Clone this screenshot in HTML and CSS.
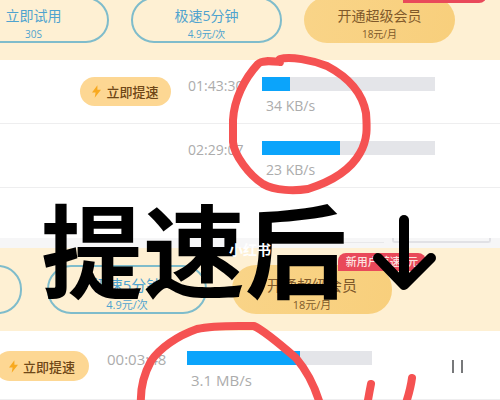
FILE: index.html
```
<!DOCTYPE html>
<html lang="zh-CN">
<head>
  <meta charset="utf-8">
  <title>提速后</title>
  <link rel="stylesheet" href="styles.css">
</head>
<body>
  <main class="page">
    <section class="panel">
      <div class="banner">
        <button class="plan"><span class="plan-name">立即试用</span><span class="plan-price">30S</span></button>
        <button class="plan"><span class="plan-name">极速5分钟</span><span class="plan-price">4.9元/次</span></button>
        <button class="plan plan-vip"><span class="plan-name">开通超级会员</span><span class="plan-price">18元/月</span>
          <span class="badge badge-cut"></span>
        </button>
      </div>
      <div class="task">
        <button class="boost">
          <svg class="bolt" viewBox="0 0 10 14"><path d="M6 0 L0 8 H4 L3 14 L10 5 H6 Z"/></svg>立即提速
        </button>
        <span class="time">01:43:30</span>
        <div class="speed">
          <div class="bar"><div class="bar-fill" style="width: 16%"></div></div>
          <span class="rate">34 KB/s</span>
        </div>
      </div>
      <div class="task">
        <span class="time">02:29:07</span>
        <div class="speed">
          <div class="bar"><div class="bar-fill" style="width: 45%"></div></div>
          <span class="rate">23 KB/s</span>
        </div>
      </div>
    </section>

    <section class="panel panel-after">
      <div class="toolbar"><span class="tool"></span><span class="tool tool-wide"></span></div>
      <div class="banner">
        <button class="plan" aria-label="立即试用"></button>
        <button class="plan"><span class="plan-name">极速5分钟</span><span class="plan-price">4.9元/次</span></button>
        <button class="plan plan-vip"><span class="plan-name">开通超级会员</span><span class="plan-price">18元/月</span>
          <span class="badge">新用户首速8元</span>
        </button>
      </div>
      <div class="task">
        <button class="boost">
          <svg class="bolt" viewBox="0 0 10 14"><path d="M6 0 L0 8 H4 L3 14 L10 5 H6 Z"/></svg>立即提速
        </button>
        <span class="time">00:03:48</span>
        <div class="speed">
          <div class="bar"><div class="bar-fill" style="width: 61%"></div></div>
          <span class="rate">3.1 MB/s</span>
        </div>
        <button class="pause" aria-label="暂停"></button>
      </div>
    </section>

    <!-- hand drawn marks -->
    <div class="caption">提速后</div>
    <svg class="marks" width="500" height="400" viewBox="0 0 500 400">
      <g class="arrow">
        <path d="M404 220 V284"/>
        <path d="M378 258 L404 285 L431 258"/>
      </g>
      <g class="pen">
        <path d="M280 62 C270 61 262 60 258 64 C244 79 234 100 233 120 L233 142 C234 155 249 175 263 184 C275 191 295 191 308 189 C330 182 350 171 360 153 C368 139 367 127 366 113 C362 91 346 76 327 66 C312 60 290 56 280 59"/>
        <path d="M141 404 C140 388 144 374 151 361 C160 348 177 336 197 329 C214 325 235 326 254 326 C263 330 281 345 296 358 C307 371 315 387 320 404"/>
        <path d="M371 384 Q369 394 367 406"/>
        <path d="M412 378 C411 386 409 394 405 406"/>
      </g>
    </svg>
    <div class="watermark">小红书</div>
  </main>
</body>
</html>
```

FILE: styles.css
```
body {
  margin: 0;
  background: #fff;
  font-family: "Open Sans", "Noto Sans CJK SC", sans-serif;
}

button {
  border: none;
  padding: 0;
  font-family: inherit;
  cursor: pointer;
}

.page {
  position: relative;
  overflow: hidden;
}

.banner {
  display: flex;
  gap: 22px;
  height: 63px;
  margin-top: -3px;
  background: #fef0d3;
}

.plan {
  position: relative;
  display: flex;
  flex-direction: column;
  align-items: center;
  flex: none;
  box-sizing: border-box;
  width: 151px;
  height: 46px;
  padding-top: 8px;
  border: 2px solid #7fbccb;
  border-radius: 24px;
  background: transparent;
  color: #4fa3cf;
}

.plan:first-child {
  margin-left: -42px;
}

.plan-name {
  font-size: 14px;
  line-height: 18px;
}

.plan-price {
  font-size: 10px;
  line-height: 18px;
}

.plan-vip {
  border-color: transparent;
  background: linear-gradient(100deg, #f9d488, #f8cf7c) border-box;
  color: #80592a;
}

.badge {
  position: absolute;
  top: -14px;
  right: -36px;
  width: 88px;
  height: 18px;
  border-radius: 8px 8px 8px 0;
  background: #e9495a;
  color: #fde3e0;
  font-size: 11px;
  font-weight: 500;
  line-height: 18px;
}

.badge-cut {
  right: -34px;
  width: 84px;
}

.task {
  display: flex;
  align-items: flex-start;
  box-sizing: border-box;
  height: 64px;
  padding: 17px 65px 0 80px;
  border-bottom: 1px solid #eeeeef;
}

.boost {
  display: flex;
  align-items: center;
  justify-content: center;
  gap: 5px;
  flex: none;
  width: 91px;
  height: 29px;
  margin-right: 17px;
  border-radius: 15px;
  background: #fdd793;
  color: #6f4717;
  font-size: 13px;
  font-weight: 500;
}

.bolt {
  width: 9px;
  height: 13px;
  fill: #f8a91f;
}

.time {
  flex: none;
  width: 74px;
  color: #acacac;
  font-size: 14px;
  line-height: 17px;
}

.time:first-child {
  margin-left: 108px;
}

.speed {
  flex: 1;
}

.bar {
  height: 14px;
  background: #e4e5e9;
}

.bar-fill {
  height: 14px;
  background: #0ba4fb;
}

.rate {
  display: block;
  padding-left: 4px;
  color: #acacac;
  font-size: 14px;
  line-height: 30px;
}

.panel-after {
  margin-top: 50px;
}

.toolbar {
  display: flex;
  justify-content: flex-end;
  gap: 8px;
  height: 10px;
  padding-right: 9px;
  background: #f6f6f7;
}

.tool {
  box-sizing: border-box;
  width: 60px;
  height: 5px;
  border-bottom: 1px solid #e8e8ea;
}

.tool-wide {
  width: 99px;
  border: 2px solid #e1e1e5;
  border-top: none;
  border-radius: 0 0 3px 3px;
}

.panel-after .banner {
  box-sizing: border-box;
  gap: 25px;
  height: 83px;
  margin-top: 0;
  padding-top: 17px;
}

.panel-after .plan {
  width: 160px;
  height: 49px;
}

.panel-after .plan:first-child {
  margin-left: -138px;
}

.panel-after .plan-name {
  font-size: 15px;
  line-height: 20px;
}

.panel-after .plan-price {
  font-size: 11px;
  line-height: 20px;
}

.panel-after .task {
  height: 69px;
  padding: 20px 37px 0 0;
}

.panel-after .boost {
  width: 94px;
  height: 30px;
  margin-right: 18px;
  margin-left: -5px;
}

.panel-after .time {
  width: 80px;
  font-size: 15px;
}

.panel-after .rate {
  font-size: 15px;
}

.pause {
  box-sizing: border-box;
  width: 11px;
  height: 13px;
  margin-top: 9px;
  margin-left: 80px;
  border: solid #77787a;
  border-width: 0 2px;
  background: transparent;
}

.caption {
  position: absolute;
  top: 187px;
  left: 41px;
  color: #000;
  font-family: "Noto Sans CJK SC", sans-serif;
  font-size: 102px;
  font-weight: bold;
  line-height: 120px;
  white-space: nowrap;
}

.marks {
  position: absolute;
  top: 0;
  left: 0;
  fill: none;
  stroke-linecap: round;
  stroke-linejoin: round;
}

.arrow {
  stroke: #000;
  stroke-width: 10px;
}

.pen {
  stroke: #f55252;
  stroke-width: 8px;
}

.watermark {
  position: absolute;
  top: 241px;
  left: 229px;
  color: #fff;
  font-size: 14px;
  font-weight: bold;
  line-height: 18px;
}
```
